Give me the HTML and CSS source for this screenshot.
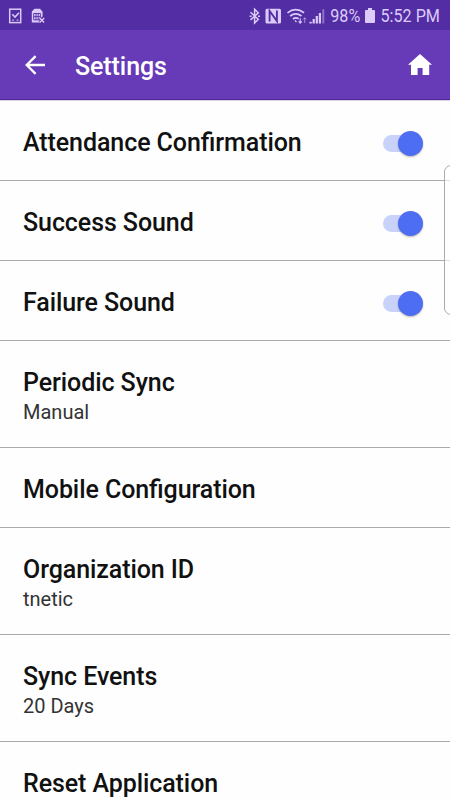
FILE: index.html
```html
<!DOCTYPE html>
<html lang="en">
<head>
    <meta charset="UTF-8" />
    <title>Settings</title>
    <link rel="stylesheet" href="styles.css">
</head>
<body>
<div class="status-bar">
    <div class="status-left">
        <svg width="14" height="16" viewBox="0 0 14 16" fill="none" stroke="currentColor">
            <rect x="1.7" y="1.2" width="11" height="13.4" stroke-width="1.5" />
            <path d="M4.3 6.3L7 9l4-4.2" stroke-width="1.6" />
            <path d="M4.1 12.1h2M8.5 12.1h2" stroke-width="1" />
        </svg>
        <svg width="15" height="16" viewBox="0 0 15 16">
            <path d="M3.5 .8H9l2.6 3v4.5L9 11v3.5H.8V3.6z" fill="currentColor" />
            <path d="M2.7 5.5h6.7v6.4H2.7zM5 5.5v6.4M7.2 5.5v6.4M2.7 8.6h6.7" fill="none" stroke="#522da3" stroke-width=".9" />
            <path d="M8.7 10l4.5 4.5M13.2 10l-4.5 4.5" stroke="#522da3" stroke-width="3" />
            <path d="M8.7 10l4.5 4.5M13.2 10l-4.5 4.5" stroke="currentColor" stroke-width="1.4" />
        </svg>
    </div>
    <div class="status-right">
        <svg width="76" height="20" viewBox="0 0 76 20" fill="none" stroke="currentColor">
            <!-- bluetooth -->
            <path d="M1.5 6.3l7.8 7L5.6 17V3.2l3.7 3.7-7.8 7" stroke-width="1.5" />
            <path d="M.6 10.2h2M9 10.2h2" stroke-width="1.4" />
            <!-- nfc -->
            <rect x="16.5" y="2.8" width="15.5" height="14.6" rx="1.5" fill="currentColor" stroke="none" />
            <path d="M20.6 15.6V5l7.3 10V4.6" stroke="#522da3" stroke-width="1.9" />
            <!-- wifi -->
            <path d="M38.5 6.8q8-6.2 16.6 0M41.1 10q5.7-4.4 11.4 0M43.9 13q2.9-2.2 5.7-.2" stroke-width="1.7" />
            <path d="M46.1 14.4l1.3 1.7" stroke-width="1.3" />
            <path d="M51.2 12.2v5M49.6 15.4l1.6 1.7 1.6-1.7" stroke-width="1.1" />
            <path d="M55.7 17v-5.2M54.1 13.5l1.6-1.7 1.6 1.7" stroke-width="1" opacity=".6" />
            <!-- signal -->
            <path d="M61.6 17.5v-1.8M64.7 17.5v-4.5M67.8 17.5V10M70.9 17.5V6.9" stroke-width="2.2" />
            <path d="M74.3 17.5V3.2" stroke-width="1.9" opacity=".45" />
        </svg>
        <span class="status-text percent">98%</span>
        <svg class="battery" width="10" height="16" viewBox="0 0 10 16">
            <path d="M3 0h4v2h2q1 0 1 1v11q0 1-1 1H1q-1 0-1-1V3q0-1 1-1h2z" fill="currentColor" />
        </svg>
        <span class="status-text time">5:52 PM</span>
    </div>
</div>

<header class="app-bar">
    <svg class="back" width="20" height="20" viewBox="0 0 20 20" fill="none" stroke="#fff" stroke-width="2.3">
        <path d="M20 10H1.8M10.6 1.1L1.7 10l8.9 8.9" />
    </svg>
    <h1>Settings</h1>
    <svg class="home" width="24" height="21" viewBox="0 0 24 21">
        <path d="M12 0l12 10.8h-2.8V21h-6.6v-7H9.6v7H3V10.8H0z" fill="#fff" />
    </svg>
</header>

<main class="settings">
    <div class="row">
        <div class="title">Attendance Confirmation</div>
        <div class="switch"></div>
    </div>
    <div class="row">
        <div class="title">Success Sound</div>
        <div class="switch"></div>
    </div>
    <div class="row">
        <div class="title">Failure Sound</div>
        <div class="switch"></div>
    </div>
    <div class="row tall">
        <div class="title">Periodic Sync</div>
        <div class="value">Manual</div>
    </div>
    <div class="row">
        <div class="title">Mobile Configuration</div>
    </div>
    <div class="row tall">
        <div class="title">Organization ID</div>
        <div class="value">tnetic</div>
    </div>
    <div class="row tall">
        <div class="title">Sync Events</div>
        <div class="value">20 Days</div>
    </div>
    <div class="row">
        <div class="title">Reset Application</div>
    </div>
</main>

<div class="edge-handle"></div>
</body>
</html>
```

FILE: styles.css
```css
body {
    margin: 0;
    height: 800px;
    overflow: hidden;
    position: relative;
    font-family: Roboto, sans-serif;
    background: #fefefe;
    color: #111;
}

svg {
    display: block;
    flex: none;
}

.status-bar {
    display: flex;
    justify-content: space-between;
    height: 30px;
    box-sizing: border-box;
    padding: 0 10px 0 8px;
    background: #522da3;
    color: #dccbfa;
}

.status-left {
    display: flex;
    gap: 9px;
    padding-top: 8px;
}

.status-right {
    display: flex;
    align-items: center;
    height: 31px;
}

.status-text {
    font-size: 19px;
    line-height: 22px;
    white-space: nowrap;
    transform: scaleX(0.85);
    transform-origin: right;
}

.battery {
    margin: 0 -5px 0 5px;
}

.app-bar {
    display: flex;
    align-items: center;
    height: 71px;
    box-sizing: border-box;
    padding: 0 18px 0 25px;
    background: #673ab7;
    border-bottom: 1px solid #d8cfe8;
    box-shadow: inset 0 -1px #522b99;
}

.app-bar h1 {
    flex: 1;
    margin: 3px 0 0 30px;
    font-size: 25px;
    font-weight: 500;
    line-height: 30px;
    letter-spacing: -0.08px;
    color: #fff;
}

.home {
    margin-bottom: 1px;
}

.row {
    position: relative;
    height: 80px;
    box-sizing: border-box;
    padding: 27px 23px 0;
    border-bottom: 1px solid #aaa;
}

.row.tall {
    height: 107px;
}

.title {
    font-size: 25px;
    font-weight: 500;
    line-height: 30px;
    letter-spacing: -0.08px;
    /* keep the fi ligature with letter-spacing on */
    font-feature-settings: "liga" 1;
}

.value {
    margin-top: -1px;
    font-size: 20px;
    line-height: 30px;
    color: #333;
}

.switch {
    position: absolute;
    top: 34px;
    right: 29px;
    width: 38px;
    height: 17px;
    border-radius: 9px;
    background: #c9d2fa;
}

.switch::after {
    content: "";
    position: absolute;
    top: -4px;
    right: -2px;
    width: 25px;
    height: 25px;
    border-radius: 50%;
    background: #4d6df3;
    box-shadow: 0 1px 2px rgba(0, 0, 0, 0.3);
}

.edge-handle {
    position: absolute;
    top: 165px;
    right: -8px;
    width: 12px;
    height: 148px;
    border: 1px solid #aaa;
    border-radius: 7px;
    background: rgba(255, 255, 255, 0.6);
}
```
